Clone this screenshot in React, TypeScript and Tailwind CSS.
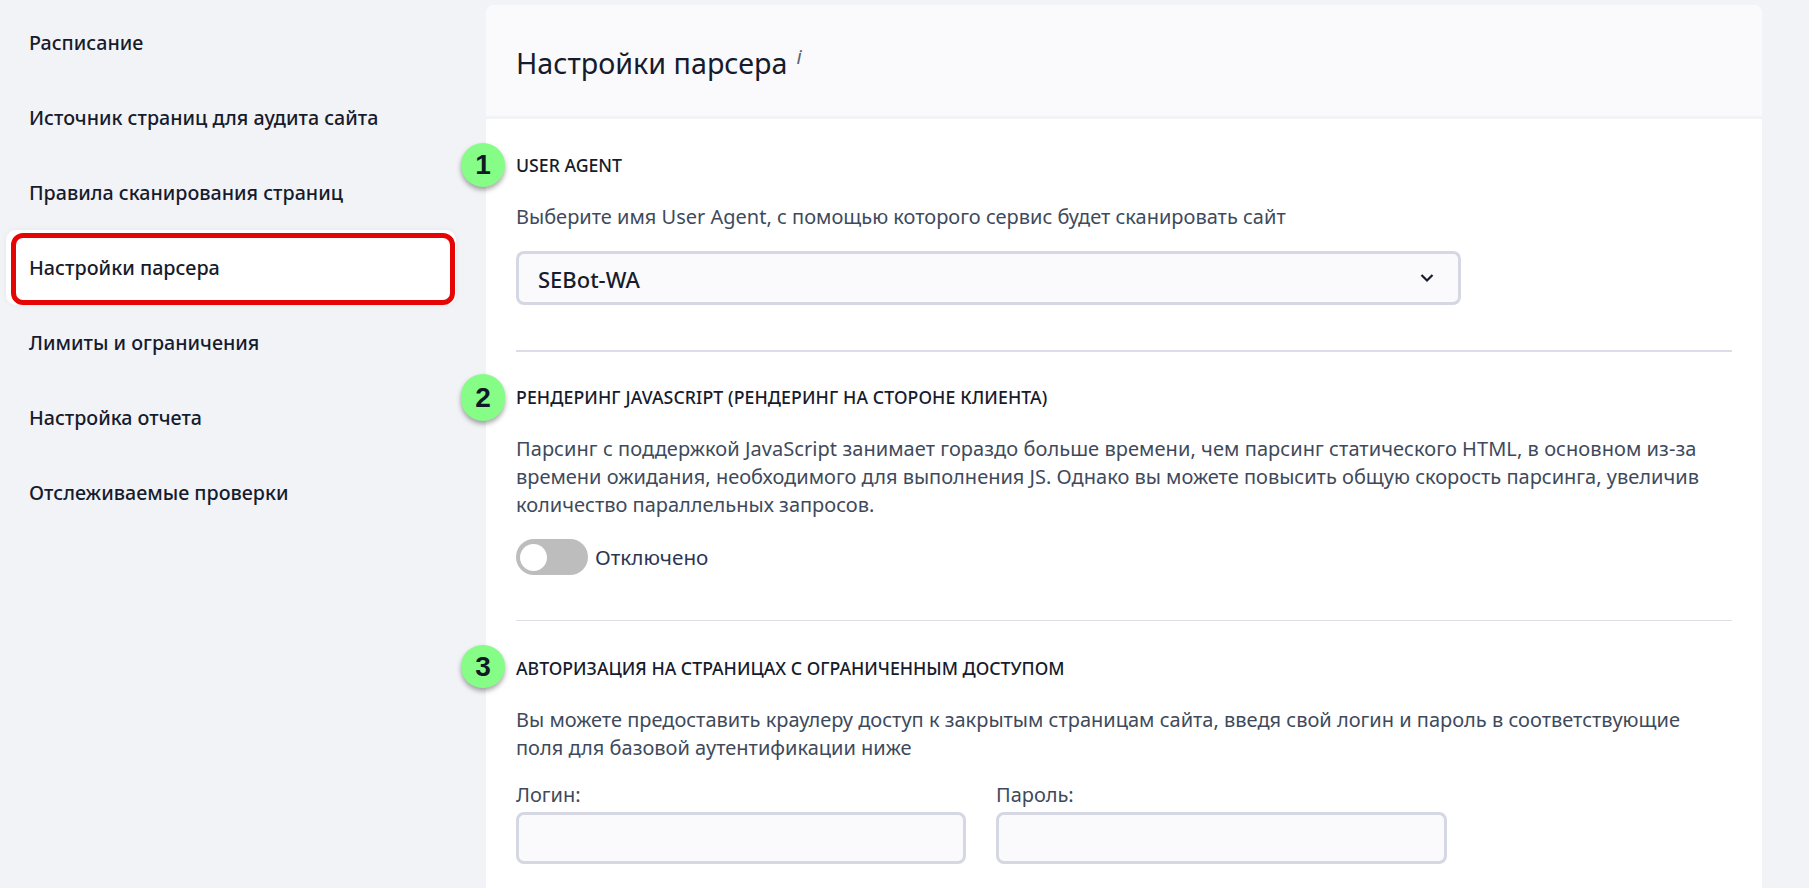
import React from "react";

const items = [
  "Расписание",
  "Источник страниц для аудита сайта",
  "Правила сканирования страниц",
  "Настройки парсера",
  "Лимиты и ограничения",
  "Настройка отчета",
  "Отслеживаемые проверки",
];

function Badge({ n, h, top }: { n: number; h: string; top: string }) {
  return (
    <div
      className={`absolute left-[-55px] w-[44px] ${h} ${top} flex items-center justify-center rounded-full bg-[#86fd86] shadow-[0_3px_5px_rgba(0,0,0,0.35)] text-[28px] font-bold text-[#111827] font-['Liberation_Sans',sans-serif]`}
    >
      {n}
    </div>
  );
}

function Heading({ children }: { children: React.ReactNode }) {
  return <div className="h-[24px] leading-[24px] text-[17.7px] font-medium text-[#161c2d] uppercase">{children}</div>;
}

export default function App() {
  return (
    <div className="flex h-[888px] overflow-hidden bg-[#f2f3f7] font-['Noto_Sans',sans-serif]">
      <nav className="ml-[6px] w-[450px] shrink-0 pt-[5px]">
        {items.map((t) =>
          t === "Настройки парсера" ? (
            <div key={t} className="relative h-[75px] flex items-center rounded-[10px] bg-white pl-[23px] pt-[1px] text-[19.8px] font-medium text-[#161c2d] shadow-[0_0_6px_rgba(0,0,0,0.05)]">
              {t}
              <div className="absolute left-[5px] right-[1px] top-[3px] bottom-0 rounded-[12px] border-[5px] border-[#e60505]" />
            </div>
          ) : (
            <div key={t} className="h-[75px] flex items-center pl-[23px] pt-[1px] text-[19.7px] font-medium text-[#161c2d]">
              {t}
            </div>
          )
        )}
      </nav>
      <main className="ml-[30px] mt-[5px] w-[1276px] shrink-0 rounded-t-[8px] bg-white">
        <header className="h-[114px] flex items-start rounded-t-[8px] border-b-[3px] border-[#f2f3f7] bg-[#fafafc] pl-[30px] pt-[35px]">
          <h1 className="text-[28.7px] leading-[46px] font-normal text-[#161c2d]">
            Настройки парсера
            <sup className="ml-[9px] text-[20px] italic text-[#5b6577]">i</sup>
          </h1>
        </header>
        <div className="px-[30px]">
          <section className="relative pt-[34px]">
            <Badge n={1} h="h-[44px]" top="top-[24px]" />
            <Heading>USER AGENT</Heading>
            <p className="mt-[26px] text-[20px] leading-[28px] text-[#3e4a5c]">
              Выберите имя User Agent, с помощью которого сервис будет сканировать сайт
            </p>
            <div className="mt-[20px] flex h-[54px] w-[945px] items-center justify-between rounded-[8px] border-[3px] border-[#d5d7e2] bg-[#fafafc] pl-[19px] pr-[24px] text-[22px] font-medium text-[#161c2d]">
              <span className="pt-[2px]">SEBot-WA</span>
              <svg width="14" height="10" viewBox="0 0 14 10" fill="none" stroke="#161c2d" strokeWidth="2.2">
                <path d="M1.5 2 L7 7.5 L12.5 2" />
              </svg>
            </div>
          </section>
          <div className="mt-[45px] h-[2px] bg-[#dcdde8]" />
          <section className="relative pt-[33px]">
            <Badge n={2} h="h-[47px]" top="top-[22px]" />
            <div className="tracking-[0.1px]">
              <Heading>Рендеринг JavaScript (рендеринг на стороне клиента)</Heading>
            </div>
            <p className="mt-[26px] text-[20px] leading-[28px] text-[#3e4a5c]">
              <span className="tracking-[0.06px]">
                Парсинг с поддержкой JavaScript занимает гораздо больше времени, чем парсинг статического HTML, в основном из-за
              </span>
              <br />
              времени ожидания, необходимого для выполнения JS. Однако вы можете повысить общую скорость парсинга, увеличив
              <br />
              количество параллельных запросов.
            </p>
            <div className="mt-[20px] flex items-center gap-[7px]">
              <div className="flex h-[36px] w-[72px] items-center rounded-full bg-[#bdbdbd] pl-[4px]">
                <div className="h-[27px] w-[27px] rounded-full bg-white" />
              </div>
              <span className="pt-[2px] text-[20.7px] text-[#2c3554]">Отключено</span>
            </div>
          </section>
          <div className="mt-[45px] h-px bg-[#dcdde8]" />
          <section className="relative pt-[35px]">
            <Badge n={3} h="h-[43px]" top="top-[24px]" />
            <Heading>Авторизация на страницах с ограниченным доступом</Heading>
            <p className="mt-[26px] text-[20px] leading-[28px] text-[#3e4a5c]">
              Вы можете предоставить краулеру доступ к закрытым страницам сайта, введя свой логин и пароль в соответствующие
              <br />
              поля для базовой аутентификации ниже
            </p>
            <div className="mt-[21px] flex gap-[30px]">
              <div className="w-[450px]">
                <div className="text-[20px] leading-[24px] text-[#3e4a5c]">Логин:</div>
                <div className="mt-[5px] h-[52px] rounded-[8px] border-[3px] border-[#d5d7e2] bg-[#fafafc]" />
              </div>
              <div className="w-[451px]">
                <div className="text-[20px] leading-[24px] text-[#3e4a5c]">Пароль:</div>
                <div className="mt-[5px] h-[52px] rounded-[8px] border-[3px] border-[#d5d7e2] bg-[#fafafc]" />
              </div>
            </div>
          </section>
        </div>
      </main>
    </div>
  );
}
